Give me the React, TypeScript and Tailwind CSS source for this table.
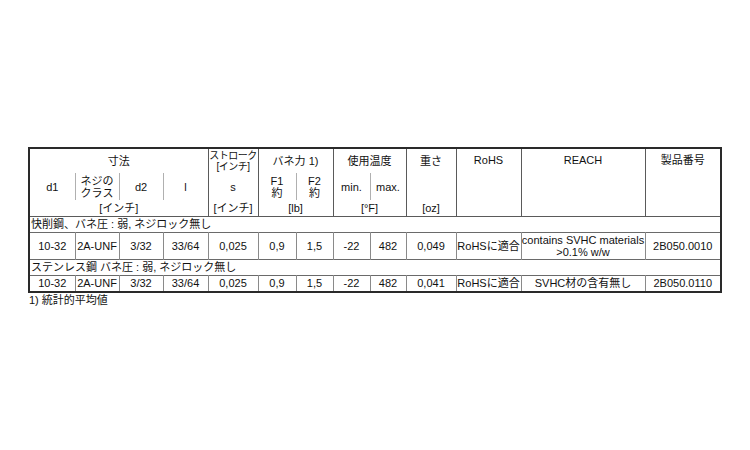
import React from "react"

const font = { fontFamily: '"Liberation Sans", Arial, "Noto Sans CJK JP", sans-serif' }

const colWidths = [46, 44, 44, 45, 50, 38, 37, 37, 36, 50, 65, 124, 76]

const G = "border-l border-[#5a5a5a]"
const S = "border-l border-[#b0b0b0]"
const D = "border-l border-[#8a8a8a]"

const rows = [
  {
    section: "快削鋼、バネ圧 : 弱, ネジロック無し",
    values: ["10-32", "2A-UNF", "3/32", "33/64", "0,025", "0,9", "1,5", "-22", "482", "0,049", "RoHSに適合"],
    reach: ["contains SVHC materials", ">0.1% w/w"],
    part: "2B050.0010",
    h: "h-[27px]",
  },
  {
    section: "ステンレス鋼 バネ圧 : 弱, ネジロック無し",
    values: ["10-32", "2A-UNF", "3/32", "33/64", "0,025", "0,9", "1,5", "-22", "482", "0,041", "RoHSに適合"],
    reach: ["SVHC材の含有無し"],
    part: "2B050.0110",
    h: "h-[17px]",
  },
]

export default function App() {
  return (
    <div className="min-h-[450px] w-[750px] bg-white pt-[147px] pl-[28px] text-[11px] leading-[12px] text-[#111]" style={font}>
      <table className="table-fixed border-collapse border-2 border-[#2a2a2a] w-[694px]">
        <colgroup>
          {colWidths.map((w, i) => (
            <col key={i} style={{ width: w }} />
          ))}
        </colgroup>
        <thead>
          <tr className="h-[25px]">
            <th colSpan={4} className="font-normal text-center align-middle">寸法</th>
            <th className={`${G} font-normal text-center align-middle whitespace-nowrap text-[10px] leading-[11px] tracking-[-0.5px]`}>
              ストローク
              <br />
              [インチ]
            </th>
            <th colSpan={2} className={`${G} font-normal text-center align-middle`}>バネ力 1)</th>
            <th colSpan={2} className={`${G} font-normal text-center align-middle`}>使用温度</th>
            <th className={`${G} font-normal text-center align-middle`}>重さ</th>
            <th rowSpan={3} className={`${G} border-b border-[#5a5a5a] font-normal text-center align-top pt-[5px]`}>RoHS</th>
            <th rowSpan={3} className={`${G} border-b border-[#5a5a5a] font-normal text-center align-top pt-[5px]`}>REACH</th>
            <th rowSpan={3} className={`${G} border-b border-[#5a5a5a] font-normal text-center align-top pt-[5px]`}>製品番号</th>
          </tr>
          <tr className="h-[27px]">
            <th className="font-normal text-center">d1</th>
            <th className={`${S} font-normal text-center whitespace-nowrap`}>
              ネジの
              <br />
              クラス
            </th>
            <th className={`${S} font-normal text-center`}>d2</th>
            <th className={`${S} font-normal text-center`}>l</th>
            <th className={`${G} font-normal text-center`}>s</th>
            <th className={`${G} font-normal text-center`}>
              F1
              <br />
              約
            </th>
            <th className={`${S} font-normal text-center`}>
              F2
              <br />
              約
            </th>
            <th className={`${G} font-normal text-center`}>min.</th>
            <th className={`${S} font-normal text-center`}>max.</th>
            <th className={G}></th>
          </tr>
          <tr className="h-[16px] border-b border-[#5a5a5a]">
            <th colSpan={4} className="font-normal text-center">[インチ]</th>
            <th className={`${G} font-normal text-center`}>[インチ]</th>
            <th colSpan={2} className={`${G} font-normal text-center`}>[lb]</th>
            <th colSpan={2} className={`${G} font-normal text-center`}>[°F]</th>
            <th className={`${G} font-normal text-center`}>[oz]</th>
          </tr>
        </thead>
        <tbody>
          {rows.map((r) => (
            <React.Fragment key={r.part}>
              <tr className="h-[16px] border-b border-[#6a6a6a]">
                <td colSpan={13} className="text-left pl-[1px] whitespace-nowrap">{r.section}</td>
              </tr>
              <tr className={`${r.h} border-b border-[#6a6a6a]`}>
                {r.values.map((v, i) => (
                  <td key={i} className={`${i === 0 ? "" : D} text-center whitespace-nowrap`}>
                    {v}
                  </td>
                ))}
                <td className={`${D} text-center whitespace-nowrap`}>
                  {r.reach.map((t, i) => (
                    <div key={i}>{t}</div>
                  ))}
                </td>
                <td className={`${D} text-center whitespace-nowrap`}>{r.part}</td>
              </tr>
            </React.Fragment>
          ))}
        </tbody>
      </table>
      <div className="pt-[1px] pl-[1px]">1) 統計的平均値</div>
    </div>
  )
}
